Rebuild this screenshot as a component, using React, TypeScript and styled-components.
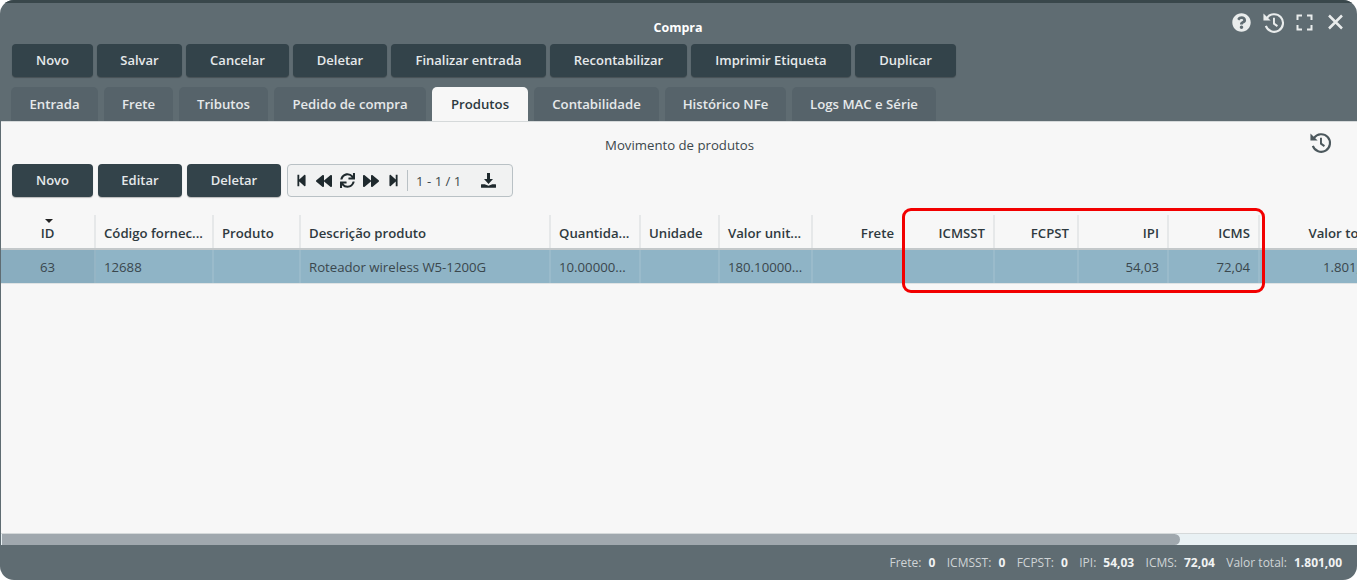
import styled, { createGlobalStyle } from "styled-components";
import {
  FaBackward,
  FaForward,
  FaQuestionCircle,
  FaStepBackward,
  FaStepForward,
  FaSync,
} from "react-icons/fa";

const GlobalStyle = createGlobalStyle`
  html, body {
    margin: 0;
    height: 100%;
    background: #fff;
    overflow: hidden;
  }
  * {
    box-sizing: border-box;
  }
  #root {
    height: 100%;
    font-family: "Open Sans", "Noto Sans", sans-serif;
    font-size: 13.2px;
  }
`;

const Screen = styled.div`
  position: relative;
  width: 1357px;
  height: 580px;
  border-radius: 14px;
  overflow: hidden;
  display: flex;
  flex-direction: column;
  background: #5f6c72;
`;

const TopStrip = styled.div`
  height: 3px;
  flex: none;
  background: #39474b;
`;

const TitleBar = styled.div`
  height: 41px;
  flex: none;
  display: grid;
  grid-template-columns: 1fr auto 1fr;
  align-items: center;
  padding: 8px 13px 0 12px;
  color: #fff;
  font-weight: 700;
  font-size: 12.5px;
`;

const WindowIcons = styled.div`
  grid-column: 3;
  justify-self: end;
  display: flex;
  align-items: center;
  gap: 11px;
  margin-top: -11px;
  color: #e9ecec;
`;

const Toolbar = styled.div<{ $tight?: boolean }>`
  display: flex;
  align-items: stretch;
  flex: none;
  height: 33px;
  gap: ${(p) => (p.$tight ? 5 : 4)}px;
  padding-left: ${(p) => (p.$tight ? 11 : 12)}px;
`;

const Button = styled.button<{ $w: number }>`
  width: ${(p) => p.$w}px;
  padding: 0 0 2px;
  border: 0;
  border-radius: 4px;
  background: #33434a;
  color: #e6e9ea;
  font: 600 13px "Open Sans", sans-serif;
  box-shadow: 0 1px 1px rgba(0, 0, 0, 0.25);
`;

const Tabs = styled.div`
  display: flex;
  flex: none;
  height: 34px;
  gap: 6px;
  margin-top: 10px;
  padding-left: 11px;
`;

const Tab = styled.div<{ $w: number; $active?: boolean }>`
  width: ${(p) => p.$w}px;
  display: flex;
  align-items: center;
  justify-content: center;
  border-radius: 5px 5px 0 0;
  background: ${(p) => (p.$active ? "#f7f7f7" : "#56636a")};
  color: ${(p) => (p.$active ? "#2c3a40" : "#e6e9ea")};
  font-weight: 600;
`;

const Content = styled.div`
  flex: 1;
  min-height: 0;
  margin-left: 1px;
  display: flex;
  flex-direction: column;
  background: #f7f7f7;
  border-top: 1px solid #d5d9da;
  overflow: hidden;
`;

const PanelHead = styled.div`
  flex: none;
  height: 42px;
  padding: 4px 25px 0 26px;
  display: grid;
  grid-template-columns: 1fr auto 1fr;
  align-items: center;
  color: #3c474c;
`;

const HistoryButton = styled.div`
  grid-column: 3;
  justify-self: end;
  display: flex;
  margin-top: -6px;
  color: #4c585d;
`;

const Pager = styled.div`
  width: 226px;
  margin-left: 1px;
  display: flex;
  align-items: center;
  padding: 0 15px 0 7px;
  border: 1px solid #b9c1c5;
  border-radius: 4px;
  background: #f1f2f2;
  color: #1f2a2e;
`;

const PagerIcons = styled.div`
  display: flex;
  align-items: center;
  gap: 8px;
  height: 21px;
  padding-right: 7px;
  border-right: 1px solid #b9c1c5;
`;

const PagerText = styled.span`
  margin-left: 8px;
  color: #3c474c;
  flex: 1;
`;

const Table = styled.div`
  margin-top: 18px;
  width: 1400px;
  flex: none;
`;

const Row = styled.div<{ $selected?: boolean }>`
  display: flex;
  height: ${(p) => (p.$selected ? 34 : 35)}px;
  background: ${(p) => (p.$selected ? "#8fb4c6" : "transparent")};
  border-bottom: ${(p) =>
    p.$selected ? "1px solid #dfe3e4" : "2px solid #c3c8ca"};
`;

const Cell = styled.div<{
  $w: number;
  $right?: boolean;
  $center?: boolean;
  $head?: boolean;
  $shaded?: boolean;
}>`
  position: relative;
  width: ${(p) => p.$w}px;
  flex: none;
  display: flex;
  align-items: center;
  justify-content: ${(p) =>
    p.$center ? "center" : p.$right ? "flex-end" : "flex-start"};
  padding: ${(p) => (p.$head ? "2px 8px 0 8px" : "0 8px")};
  border-right: 2px solid ${(p) => (p.$head ? "#e6e8e9" : "rgba(255,255,255,0.1)")};
  background: ${(p) => (p.$shaded ? "rgba(0,0,0,0.035)" : "transparent")};
  color: ${(p) => (p.$head ? "#2f3a3f" : "#3a474d")};
  font-weight: ${(p) => (p.$head ? 600 : 400)};
  white-space: nowrap;
  overflow: hidden;
`;

const SortCaret = styled.span`
  position: absolute;
  top: 4px;
  left: 44px;
  border-left: 4px solid transparent;
  border-right: 4px solid transparent;
  border-top: 4px solid #222;
`;

const Spacer = styled.div`
  flex: 1;
`;

const ScrollTrack = styled.div`
  flex: none;
  height: 12px;
  background: #e9f1f4;
  border-top: 1px solid #d5d9da;
`;

const ScrollThumb = styled.div`
  width: 1178px;
  height: 100%;
  margin-left: 1px;
  border-radius: 0 6px 6px 0;
  background: #a0a8ae;
`;

const Footer = styled.div`
  flex: none;
  height: 35px;
  display: flex;
  align-items: center;
  justify-content: flex-end;
  gap: 11.4px;
  padding: 0 15px 0 0;
  color: #cfd4d6;
  font-size: 12px;
`;

const Total = styled.span`
  display: flex;
  gap: 7px;
  b {
    color: #f1f3f3;
    font-weight: 700;
  }
`;

// overlay annotation drawn over the table
const Highlight = styled.div`
  position: absolute;
  left: 902px;
  top: 208px;
  width: 363px;
  height: 85px;
  border: 3px solid #f20000;
  border-radius: 9px;
  pointer-events: none;
`;

const HistoryIcon = ({ size }: { size: number }) => (
  <svg width={size} height={size} viewBox="0 0 24 24" fill="none" stroke="currentColor" strokeWidth="2.2">
    <path d="M5.2 7.2A9.2 9.2 0 1 1 4 15.5" />
    <path d="M1.5 2.5l7.5 7.5H1.5z" fill="currentColor" stroke="none" />
    <path d="M12.5 7v6.2l3.6 2.6" strokeWidth="2" />
  </svg>
);

const ExpandIcon = () => (
  <svg width="17" height="17" viewBox="0 0 17 17" fill="none" stroke="currentColor" strokeWidth="2">
    <path d="M1.5 6V1.5H6M11 1.5h4.5V6M15.5 11v4.5H11M6 15.5H1.5V11" />
  </svg>
);

const CloseIcon = () => (
  <svg width="20" height="20" viewBox="0 0 20 20" fill="none" stroke="currentColor" strokeWidth="2.5">
    <path d="M5 3.5l13 13M18 3.5l-13 13" />
  </svg>
);

const DownloadIcon = () => (
  <svg width="17" height="17" viewBox="0 0 17 17" fill="currentColor">
    <path d="M7 1h3v6h3l-4.5 5L4 7h3z" />
    <path d="M1.5 12.2h3.2l3.8 1.6 3.8-1.6h3.2c.4 0 .5.3.5.6v2.4c0 .4-.2.6-.6.6H1.6c-.4 0-.6-.2-.6-.6v-2.4c0-.3.2-.6.5-.6z" />
  </svg>
);

const topButtons = [
  { label: "Novo", w: 81 },
  { label: "Salvar", w: 85 },
  { label: "Cancelar", w: 103 },
  { label: "Deletar", w: 94 },
  { label: "Finalizar entrada", w: 155 },
  { label: "Recontabilizar", w: 137 },
  { label: "Imprimir Etiqueta", w: 160 },
  { label: "Duplicar", w: 101 },
];

const tabs = [
  { label: "Entrada", w: 87 },
  { label: "Frete", w: 69 },
  { label: "Tributos", w: 89 },
  { label: "Pedido de compra", w: 152 },
  { label: "Produtos", w: 96, active: true },
  { label: "Contabilidade", w: 125 },
  { label: "Histórico NFe", w: 121 },
  { label: "Logs MAC e Série", w: 144 },
];

const columns = [
  { head: "ID", value: "63", w: 95, center: true, shaded: true },
  { head: "Código fornec...", value: "12688", w: 118 },
  { head: "Produto", value: "", w: 87 },
  { head: "Descrição produto", value: "Roteador wireless W5-1200G", w: 250 },
  { head: "Quantida...", value: "10.00000...", w: 90 },
  { head: "Unidade", value: "", w: 79 },
  { head: "Valor unit...", value: "180.10000...", w: 93 },
  { head: "Frete", value: "", w: 91, right: true },
  { head: "ICMSST", value: "", w: 91, right: true },
  { head: "FCPST", value: "", w: 84, right: true },
  { head: "IPI", value: "54,03", w: 90, right: true },
  { head: "ICMS", value: "72,04", w: 91, right: true },
  { head: "Valor total", value: "1.801,00", w: 125, right: true },
];

const totals = [
  ["Frete:", "0"],
  ["ICMSST:", "0"],
  ["FCPST:", "0"],
  ["IPI:", "54,03"],
  ["ICMS:", "72,04"],
  ["Valor total:", "1.801,00"],
];

const App = () => {
  return (
    <Screen>
      <GlobalStyle />
      <TopStrip />
      <TitleBar>
        <span style={{ gridColumn: 2 }}>Compra</span>
        <WindowIcons>
          <FaQuestionCircle size={19} />
          <HistoryIcon size={23} />
          <ExpandIcon />
          <CloseIcon />
        </WindowIcons>
      </TitleBar>
      <Toolbar>
        {topButtons.map((b) => (
          <Button key={b.label} $w={b.w}>
            {b.label}
          </Button>
        ))}
      </Toolbar>
      <Tabs>
        {tabs.map((t) => (
          <Tab key={t.label} $w={t.w} $active={t.active}>
            {t.label}
          </Tab>
        ))}
      </Tabs>
      <Content>
        <PanelHead>
          <span style={{ gridColumn: 2 }}>Movimento de produtos</span>
          <HistoryButton>
            <HistoryIcon size={23} />
          </HistoryButton>
        </PanelHead>
        <Toolbar $tight>
          <Button $w={81}>Novo</Button>
          <Button $w={84}>Editar</Button>
          <Button $w={94}>Deletar</Button>
          <Pager>
            <PagerIcons>
              <FaStepBackward size={13} />
              <FaBackward size={16} />
              <FaSync size={15} />
              <FaForward size={16} />
              <FaStepForward size={13} />
            </PagerIcons>
            <PagerText>1 - 1 / 1</PagerText>
            <DownloadIcon />
          </Pager>
        </Toolbar>
        <Table>
          <Row>
            {columns.map((c) => (
              <Cell key={c.head} $w={c.w} $right={c.right} $center={c.center} $head>
                {c.head === "ID" && <SortCaret />}
                {c.head}
              </Cell>
            ))}
          </Row>
          <Row $selected>
            {columns.map((c) => (
              <Cell
                key={c.head}
                $w={c.w}
                $right={c.right}
                $center={c.center}
                $shaded={c.shaded}
              >
                {c.value}
              </Cell>
            ))}
          </Row>
        </Table>
        <Spacer />
        <ScrollTrack>
          <ScrollThumb />
        </ScrollTrack>
      </Content>
      <Footer>
        {totals.map(([label, value]) => (
          <Total key={label}>
            <span>{label}</span>
            <b>{value}</b>
          </Total>
        ))}
      </Footer>
      <Highlight />
    </Screen>
  );
};

export default App;
